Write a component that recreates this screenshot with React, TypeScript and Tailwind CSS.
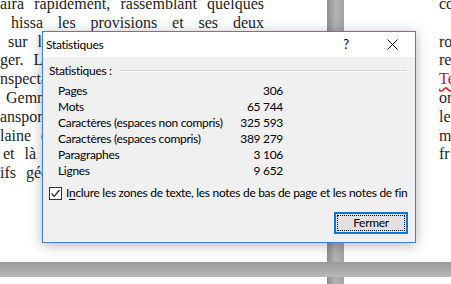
import React from "react"

const leftLines: { text: string; pl: string; justify?: boolean }[] = [
  { text: "aira rapidement, rassemblant quelques", pl: "pl-0", justify: true },
  { text: "hissa les provisions et ses deux", pl: "pl-[11px]", justify: true },
  { text: "sur le", pl: "pl-[8px]" },
  { text: "ger. Les", pl: "pl-0" },
  { text: "nspecta", pl: "pl-0" },
  { text: "Gemma", pl: "pl-[6px]" },
  { text: "ansport", pl: "pl-0" },
  { text: "laine qu", pl: "pl-0" },
  { text: "et là qu", pl: "pl-[3px]" },
  { text: "ifs géog", pl: "pl-0" },
]

const rightLines = ["co", "", "ro", "re", "Te", "or", "le", "m", "fr"]

const stats = [
  { label: "Pages", value: "306" },
  { label: "Mots", value: "65 744" },
  { label: "Caractères (espaces non compris)", value: "325 593" },
  { label: "Caractères (espaces compris)", value: "389 279" },
  { label: "Paragraphes", value: "3 106" },
  { label: "Lignes", value: "9 652" },
]

function StatsDialog() {
  return (
    <div className="absolute left-[42px] top-[31px] w-[374px] h-[212px] border border-[#3a86d3] bg-[#f0f0f0] shadow-[0_2px_12px_rgba(0,0,0,0.3)] flex flex-col font-['Lato',sans-serif] text-[12px] tracking-[-0.3px] text-black">
      {/* title bar */}
      <div className="h-[25px] bg-white flex items-center shrink-0">
        <span className="pl-[3px] flex-1 leading-[16px]">Statistiques</span>
        <div className="w-[46px] h-full flex items-center justify-center text-[13px]">?</div>
        <div className="w-[46px] h-full flex items-center justify-center">
          <svg width="11" height="11" viewBox="0 0 11 11">
            <path d="M0.5 0.5 L10.5 10.5 M10.5 0.5 L0.5 10.5" stroke="#000" strokeWidth="1" />
          </svg>
        </div>
      </div>

      {/* body */}
      <div className="flex-1 flex flex-col pt-[6px] pl-[6px] pr-[7px]">
        <div className="flex items-center h-[16px]">
          <span className="leading-[16px] whitespace-nowrap">Statistiques :</span>
          <div className="flex-1 ml-[7px] mr-[1px] flex flex-col">
            <div className="h-px bg-[#d4d4d4]" />
            <div className="h-px bg-white" />
          </div>
        </div>

        <div className="mt-[4px] pl-[9px] flex flex-col">
          {stats.map((s) => (
            <div key={s.label} className="w-[225px] h-[16px] flex justify-between leading-[16px] whitespace-nowrap">
              <span>{s.label}</span>
              <span>{s.value}</span>
            </div>
          ))}
        </div>

        <div className="mt-[6px] flex items-center h-[16px]">
          <div className="w-[13px] h-[13px] border border-[#333] bg-white flex items-center justify-center shrink-0">
            <svg width="11" height="11" viewBox="0 0 11 11">
              <path d="M1.5 5.5 L4.2 8.3 L9.5 2" stroke="#222" strokeWidth="1.2" fill="none" />
            </svg>
          </div>
          <span className="ml-[4px] leading-[16px] whitespace-nowrap">
            I<span className="underline underline-offset-2">n</span>clure les zones de texte, les notes de bas de page et les notes de fin
          </span>
        </div>

        <div className="mt-[11px] flex justify-end">
          <div className="w-[74px] h-[22px] border-2 border-[#0a78d7] bg-[#e1e1e1] p-px">
            <div className="w-full h-full border border-dotted border-black flex items-center justify-center leading-[16px]">
              Fermer
            </div>
          </div>
        </div>
      </div>
    </div>
  )
}

export default function App() {
  return (
    <div className="relative w-[451px] h-[284px] overflow-hidden bg-white">
      <div className="flex flex-col h-full">
        <div className="flex h-[262px]">
          {/* left page */}
          <div className="w-[327px] bg-white overflow-hidden font-['Liberation_Serif',serif] text-[16px] text-[#1e1e1e]">
            <div className="mt-[-5px] w-[264px] flex flex-col">
              {leftLines.map((l, i) => (
                <div
                  key={i}
                  className={`${l.pl} leading-[18.8px] whitespace-nowrap ${l.justify ? "text-justify [text-align-last:justify]" : "[word-spacing:6px]"}`}
                >
                  {l.text}
                </div>
              ))}
            </div>
          </div>
          {/* vertical gutter */}
          <div className="w-[17px] bg-gradient-to-r from-[#8f8f8f] via-[#b3b3b3] to-[#a2a2a2]" />
          {/* right page */}
          <div className="flex-1 bg-white overflow-hidden font-['Liberation_Serif',serif] text-[16px] text-[#1e1e1e] pl-[95px]">
            <div className="mt-[-5px] flex flex-col">
              {rightLines.map((t, i) => (
                <div key={i} className="h-[18.8px] leading-[18.8px] whitespace-nowrap">
                  {t === "Te" ? (
                    <span className="text-[#b01c1c] underline decoration-wavy decoration-[#e02020] underline-offset-2">Te</span>
                  ) : (
                    t
                  )}
                </div>
              ))}
            </div>
          </div>
        </div>
        {/* horizontal gutter */}
        <div className="h-[15px] bg-gradient-to-b from-[#9a9a9a] to-[#b9b9b9]" />
        <div className="flex flex-1">
          <div className="w-[327px] bg-white" />
          <div className="w-[17px] bg-gradient-to-r from-[#8f8f8f] via-[#b3b3b3] to-[#a2a2a2]" />
          <div className="flex-1 bg-white" />
        </div>
      </div>

      <StatsDialog />
    </div>
  )
}
